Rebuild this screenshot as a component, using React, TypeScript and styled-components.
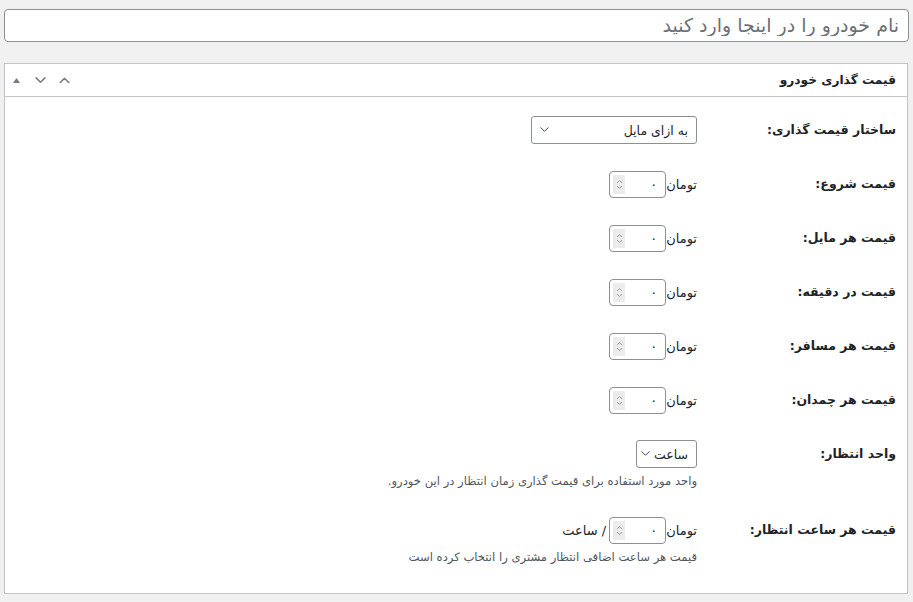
import React, { FC } from 'react';
import styled, { createGlobalStyle } from 'styled-components';

const colors = {
  page: '#f0f0f1',
  border: '#c3c4c7',
  inputBorder: '#8c8f94',
  text: '#1d2327',
  muted: '#50575e',
  icon: '#787c82',
};

const GlobalStyle = createGlobalStyle`
  html, body {
    margin: 0;
    padding: 0;
    background: ${colors.page};
  }
  body {
    font-family: "DejaVu Sans", "Noto Sans", sans-serif;
    color: ${colors.text};
  }
  * { box-sizing: border-box; }
`;

const Page = styled.div`
  direction: rtl;
  padding: 9px 4px 9px 4px;
  width: 913px;
`;

const TitleInput = styled.input`
  display: block;
  width: 100%;
  height: 33px;
  margin: 0;
  padding: 0 9px 2px;
  border: 1px solid ${colors.inputBorder};
  border-radius: 4px;
  background: #fff;
  font-family: inherit;
  font-size: 19px;
  color: ${colors.text};
  outline: none;

  &::placeholder {
    color: #6c7075;
  }
`;

const MetaBox = styled.div`
  margin: 21px 1px 0 0;
  border: 1px solid ${colors.border};
  background: #fff;
`;

const Header = styled.div`
  display: flex;
  align-items: center;
  justify-content: space-between;
  height: 33px;
  padding: 0 11px 0 5px;
  border-bottom: 1px solid ${colors.border};
`;

const HeaderTitle = styled.h2`
  margin: 0;
  font-size: 12.2px;
  font-weight: 700;
`;

const Controls = styled.div`
  display: flex;
  align-items: center;
  gap: 12px;
  color: ${colors.icon};
`;

const ControlButton = styled.span`
  display: flex;
  align-items: center;
  justify-content: center;
  width: 12px;
  height: 12px;
`;

const Body = styled.div`
  padding: 6px 11px 14px;
`;

const Row = styled.div`
  display: grid;
  grid-template-columns: 199px 1fr;
  padding: 13px 0;
`;

const Label = styled.label`
  font-size: 12.5px;
  font-weight: 700;
  line-height: 28px;
`;

const Field = styled.div`
  display: flex;
  flex-direction: column;
  align-items: flex-start;
`;

const FieldLine = styled.div`
  display: flex;
  align-items: center;
  min-height: 28px;
  font-size: 13px;
`;

const Description = styled.p`
  margin: 4px 0 0;
  font-size: 11.6px;
  line-height: 18px;
  color: ${colors.muted};
`;

const SelectBox = styled.div<{ $width: number }>`
  display: flex;
  align-items: center;
  justify-content: space-between;
  gap: 4px;
  width: ${p => p.$width}px;
  height: 28px;
  padding: 0 8px 0 8px;
  border: 1px solid ${colors.inputBorder};
  border-radius: 3px;
  font-size: 12.5px;
  color: ${colors.text};
  background: #fff;
  white-space: nowrap;

  svg {
    flex-shrink: 0;
    color: #3c434a;
  }
`;

const NumberBox = styled.div`
  display: flex;
  align-items: center;
  justify-content: space-between;
  width: 57px;
  height: 27px;
  padding: 0 8px 0 3px;
  border: 1px solid ${colors.inputBorder};
  border-radius: 4px;
  background: #fff;
  font-size: 13px;
`;

const Spinner = styled.span`
  display: flex;
  align-items: center;
  justify-content: center;
  width: 12px;
  height: 19px;
  background: #ececec;
  color: #9a9a9a;
`;

const Unit = styled.span`
  min-width: 28px;
  text-align: right;
`;

const Suffix = styled.span`
  padding-right: 3px;
`;

const Chevron: FC<{ up?: boolean; size?: number; weight?: number }> = ({
  up,
  size = 10,
  weight = 1.4,
}) => (
  <svg width={size} height={size * 0.6} viewBox="0 0 10 6" fill="none">
    <path
      d={up ? 'M1 5.2 L5 1.2 L9 5.2' : 'M1 0.8 L5 4.8 L9 0.8'}
      stroke="currentColor"
      strokeWidth={weight}
      strokeLinecap="round"
      strokeLinejoin="round"
    />
  </svg>
);

const Select: FC<{ value: string; width: number }> = ({ value, width }) => (
  <SelectBox $width={width}>
    <span>{value}</span>
    <Chevron size={9} weight={1.1} />
  </SelectBox>
);

const PriceInput: FC<{ suffix?: string }> = ({ suffix }) => (
  <FieldLine>
    <Unit>تومان</Unit>
    <NumberBox>
      <span>۰</span>
      <Spinner>
        <svg width="7" height="11" viewBox="0 0 7 11" fill="none">
          <path
            d="M1 4 L3.5 1.5 L6 4 M1 7 L3.5 9.5 L6 7"
            stroke="currentColor"
            strokeWidth="0.9"
          />
        </svg>
      </Spinner>
    </NumberBox>
    {suffix && <Suffix>{suffix}</Suffix>}
  </FieldLine>
);

const priceRows = [
  'قیمت شروع:',
  'قیمت هر مایل:',
  'قیمت در دقیقه:',
  'قیمت هر مسافر:',
  'قیمت هر چمدان:',
];

const App: FC = () => (
  <>
    <GlobalStyle />
    <Page>
      <TitleInput placeholder="نام خودرو را در اینجا وارد کنید" />
      <MetaBox>
        <Header>
          <HeaderTitle>قیمت گذاری خودرو</HeaderTitle>
          <Controls>
            <ControlButton>
              <Chevron up size={11} />
            </ControlButton>
            <ControlButton>
              <Chevron size={11} />
            </ControlButton>
            <ControlButton>
              <svg width="7" height="5" viewBox="0 0 7 5">
                <path d="M0 5 L3.5 0 L7 5 Z" fill="currentColor" />
              </svg>
            </ControlButton>
          </Controls>
        </Header>
        <Body>
          <Row>
            <Label>ساختار قیمت گذاری:</Label>
            <Field>
              <FieldLine>
                <Select value="به ازای مایل" width={166} />
              </FieldLine>
            </Field>
          </Row>
          {priceRows.map(label => (
            <Row key={label}>
              <Label>{label}</Label>
              <Field>
                <PriceInput />
              </Field>
            </Row>
          ))}
          <Row>
            <Label>واحد انتظار:</Label>
            <Field>
              <FieldLine>
                <Select value="ساعت" width={61} />
              </FieldLine>
              <Description>
                واحد مورد استفاده برای قیمت گذاری زمان انتظار در این خودرو.
              </Description>
            </Field>
          </Row>
          <Row>
            <Label>قیمت هر ساعت انتظار:</Label>
            <Field>
              <PriceInput suffix="/ ساعت" />
              <Description>
                قیمت هر ساعت اضافی انتظار مشتری را انتخاب کرده است
              </Description>
            </Field>
          </Row>
        </Body>
      </MetaBox>
    </Page>
  </>
);

export default App;
